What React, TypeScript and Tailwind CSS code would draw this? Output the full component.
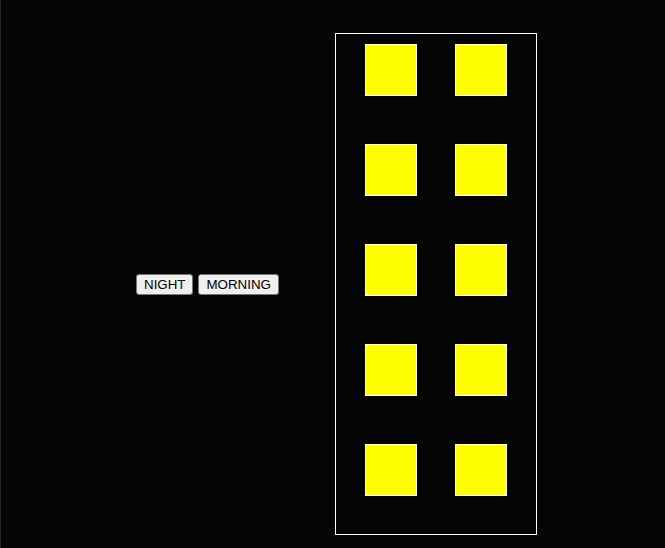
import { useState } from "react";

const windows = Array.from({ length: 10 }, (_, i) => i);

const App = () => {
  const [mode, setMode] = useState<"night" | "morning">("night");
  const lit = mode === "night";

  return (
    <div
      className="w-[665px] h-[548px] bg-[#050505] border-l border-[#262626] flex items-center pl-[135px] pt-[20px] overflow-hidden"
      style={{ fontFamily: '"Liberation Sans", Arial, sans-serif' }}
    >
      <div className="flex items-center gap-[5px]">
        <button
          onClick={() => setMode("night")}
          className="bg-[#efefef] border border-[#767676] rounded-[3px] px-[7px] py-[2px] text-[13.33px] leading-[15px] text-black"
        >
          NIGHT
        </button>
        <button
          onClick={() => setMode("morning")}
          className="bg-[#efefef] border border-[#767676] rounded-[3px] px-[7px] py-[2px] text-[13.33px] leading-[15px] text-black"
        >
          MORNING
        </button>
      </div>

      {/* building */}
      <div className="ml-[56px] w-[202px] h-[502px] border border-white pt-[10px] px-[29px]">
        <div className="grid grid-cols-[52px_52px] gap-x-[38px] gap-y-[48px]">
          {windows.map((i) => (
            <div
              key={i}
              className={
                lit
                  ? "w-[52px] h-[52px] border border-white bg-[#ffff00]"
                  : "w-[52px] h-[52px] border border-white bg-[#333333]"
              }
            />
          ))}
        </div>
      </div>
    </div>
  );
};

export default App;
